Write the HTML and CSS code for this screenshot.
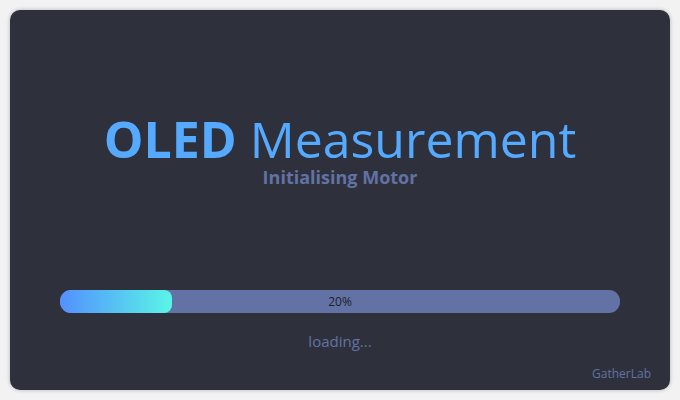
FILE: index.html
```html
<!DOCTYPE html>
<html>
<head>
<meta charset="utf-8">
<link rel="stylesheet" href="styles.css">
</head>
<body>
<div class="card">
  <div class="head">
    <h1 class="title"><span class="bold">OLED</span> Measurement</h1>
    <div class="subtitle">Initialising Motor</div>
  </div>
  <div class="progress">
    <div class="fill" style="width: 20%"></div>
    <div class="pct">20%</div>
  </div>
  <div class="loading">loading...</div>
  <div class="brand">GatherLab</div>
</div>
</body>
</html>
```
FILE: styles.css
```css
html, body {
  margin: 0;
  padding: 0;
  background: #f2f2f2;
}
body {
  width: 680px;
  height: 400px;
  padding: 10px;
  box-sizing: border-box;
  font-family: "Open Sans", "Noto Sans", sans-serif;
}
.card {
  height: 380px;
  background: #2e313c;
  border-radius: 10px;
  box-shadow: 0 0 4px rgba(0,0,0,0.25);
  display: flex;
  flex-direction: column;
  align-items: stretch;
  padding: 0 50px;
  box-sizing: border-box;
}
.head {
  padding-top: 102px;
  display: flex;
  flex-direction: column;
  align-items: center;
}
.title {
  margin: 0;
  font-size: 50px;
  line-height: 54px;
  font-weight: 400;
  color: #55aaff;
  white-space: nowrap;
}
.bold {
  font-weight: 700;
}
.subtitle {
  font-size: 18px;
  line-height: 22px;
  font-weight: 700;
  color: #6272a4;
}
.progress {
  margin-top: 102px;
  height: 23px;
  border-radius: 11px;
  background: #6272a4;
  position: relative;
  overflow: hidden;
}
.fill {
  height: 100%;
  border-radius: 8px;
  background: linear-gradient(90deg, #5390ff, #5af5e6);
}
.pct {
  position: absolute;
  inset: 0;
  display: flex;
  align-items: center;
  justify-content: center;
  font-size: 12px;
  color: #1e1f26;
}
.loading {
  margin-top: 18px;
  text-align: center;
  font-size: 15px;
  color: #6272a4;
}
.brand {
  margin-top: 14px;
  align-self: flex-end;
  margin-right: -31px;
  font-size: 12px;
  color: #6272a4;
}
```
